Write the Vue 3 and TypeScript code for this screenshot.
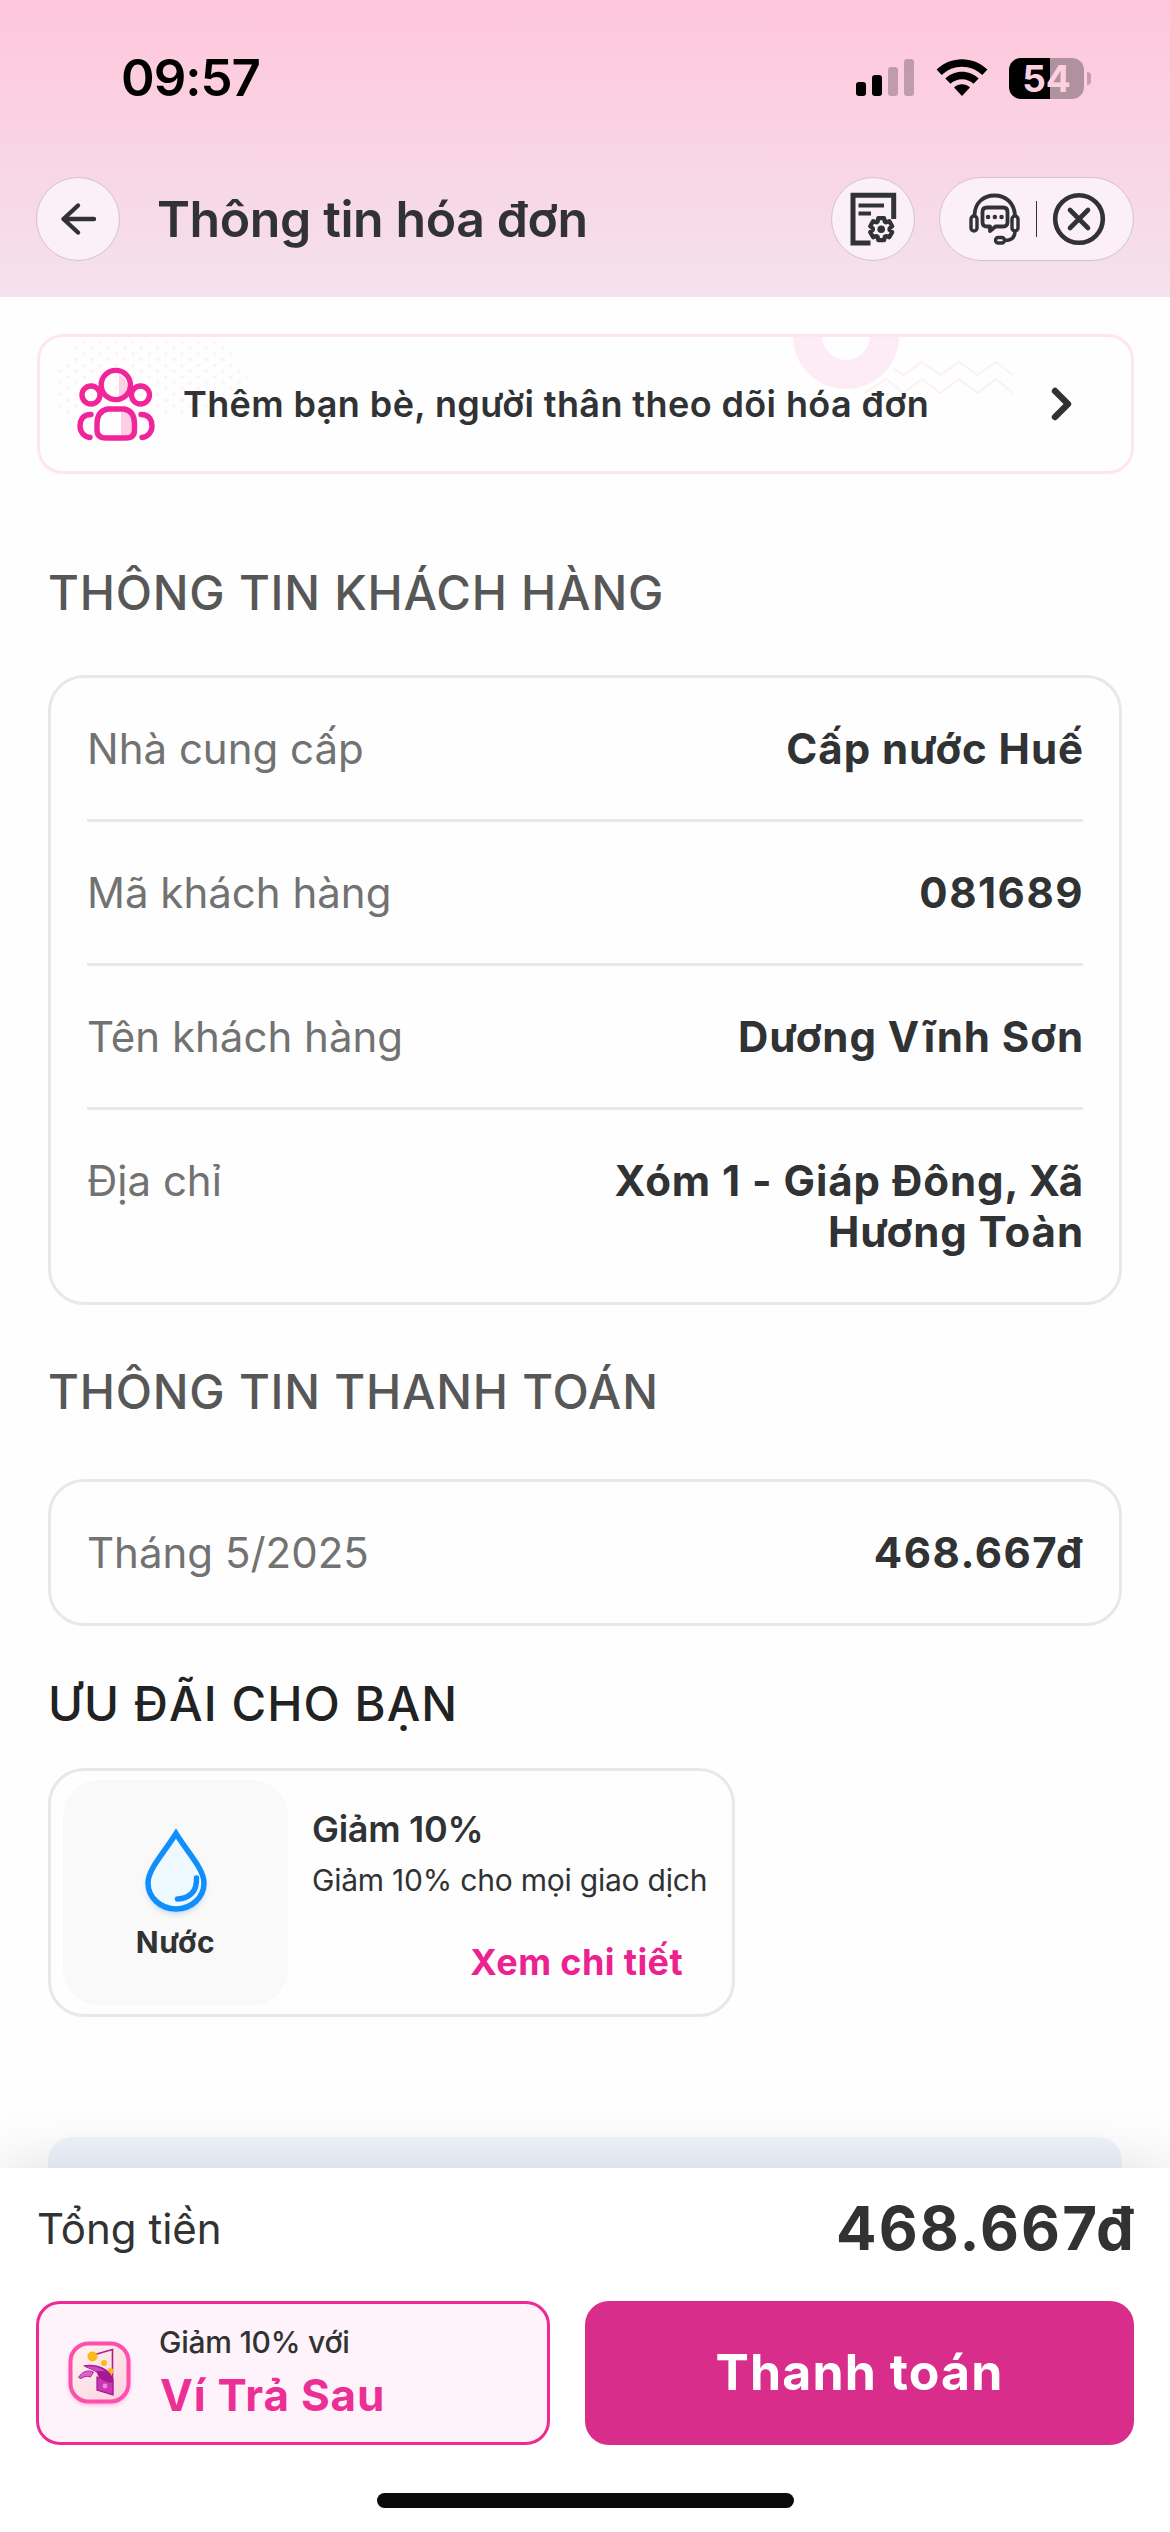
<script setup lang="ts">
interface InfoRow {
  label: string
  value: string
  numeric?: boolean
}

const customer: InfoRow[] = [
  { label: 'Nhà cung cấp', value: 'Cấp nước Huế' },
  { label: 'Mã khách hàng', value: '081689', numeric: true },
  { label: 'Tên khách hàng', value: 'Dương Vĩnh Sơn' },
  { label: 'Địa chỉ', value: 'Xóm 1 - Giáp Đông, Xã Hương Toàn' },
]

const payments: InfoRow[] = [{ label: 'Tháng 5/2025', value: '468.667đ', numeric: true }]

// Outline of a six-toothed gear centred on (cx, cy).
function gear(cx: number, cy: number, outer: number, inner: number): string {
  const pts: string[] = []
  for (let i = 0; i < 6; i++) {
    const base = -90 + i * 60
    const steps: [number, number][] = [
      [-25, inner],
      [-15, outer],
      [15, outer],
      [25, inner],
    ]
    for (const [offset, r] of steps) {
      const a = ((base + offset) * Math.PI) / 180
      pts.push(`${(cx + r * Math.cos(a)).toFixed(2)} ${(cy + r * Math.sin(a)).toFixed(2)}`)
    }
  }
  return `M${pts.join('L')}Z`
}

const gearPath = gear(31.2, 38.2, 11.4, 8.4)
</script>

<template>
  <div class="screen">
    <header class="header">
      <div class="status">
        <span class="time">09:57</span>
        <div class="status-icons">
          <svg class="signal" width="58" height="38" viewBox="0 0 58 38">
            <rect x="0" y="23" width="10" height="14" rx="3" />
            <rect x="16" y="16" width="10" height="21" rx="3" />
            <rect x="32" y="8" width="10" height="29" rx="3" opacity=".24" />
            <rect x="48" y="0" width="10" height="37" rx="3" opacity=".24" />
          </svg>
          <svg class="wifi" width="52" height="38" viewBox="0 0 52 38">
            <path d="M.6 10.6C14.8-3.2 37.2-3.2 51.4 10.6L46.300 16C35 4.900 17 4.900 5.700 16Z" />
            <path d="M9.300 19.600C18.600 10.500 33.400 10.500 42.700 19.600L37.500 24.800C31.100 18.700 20.900 18.700 14.500 24.800Z" />
            <path d="M18 28.400C22.600 24.300 29.400 24.300 34 28.400L26 37Z" />
          </svg>
          <div class="battery">
            <span class="battery-body">54</span>
            <span class="battery-nub"></span>
          </div>
        </div>
      </div>
      <nav class="nav">
        <button class="round" aria-label="Back">
          <svg width="40" height="40" viewBox="0 0 40 40" class="ink">
            <path d="M20 6.500L5.500 20L20 33.500M5.500 20H36" stroke-width="4.400" />
          </svg>
        </button>
        <h1 class="title">Thông tin hóa đơn</h1>
        <button class="round doc" aria-label="Settings">
          <svg width="50" height="56" viewBox="0 0 50 56" class="ink sharp">
            <path d="M43.700 28V4.300H3V52H20.500" stroke-width="5" />
            <path d="M8.500 14.500H34M8.500 22.500H21" stroke-width="4.200" />
            <path :d="gearPath" stroke-width="4.200" stroke-linejoin="round" />
            <circle cx="31.200" cy="38.200" r="3.800" class="solid" />
          </svg>
        </button>
        <div class="pill">
          <svg class="ink" width="52" height="52" viewBox="0 0 52 52">
            <rect x="2" y="23" width="6" height="15" rx="3" stroke-width="3.400" />
            <rect x="43" y="23" width="6" height="15" rx="3" stroke-width="3.400" />
            <path d="M5.500 22C6 10 14 2.500 25.500 2.500S45 10 46 22" stroke-width="3.800" />
            <path d="M18 14.500H34Q38.500 14.500 38.500 19V29Q38.500 33.500 34 33.500H26.500L21 38V33.500H18Q13.500 33.500 13.500 29V19Q13.500 14.500 18 14.500Z" stroke-width="3.800" />
            <path d="M19 24H19.100M25.800 24H25.900M32.500 24H32.600" stroke-width="4.400" />
            <path d="M46 38C46 44.500 42.500 47.500 36 47.500" stroke-width="3.400" />
            <rect x="26.500" y="44.500" width="9" height="5.500" rx="2.700" stroke-width="3.400" />
          </svg>
          <span class="pill-line"></span>
          <svg class="ink" width="54" height="54" viewBox="0 0 54 54">
            <circle cx="27" cy="27" r="23.800" stroke-width="4.600" />
            <path d="M18 18L36 36M36 18L18 36" stroke-width="4.600" />
          </svg>
        </div>
      </nav>
    </header>

    <main class="content">
      <section class="banner">
        <svg class="banner-art" width="1091" height="134" viewBox="40 337 1091 134">
          <defs>
            <pattern id="dots" width="16.300" height="11.600" patternUnits="userSpaceOnUse" x="73" y="345">
              <circle cx="3" cy="3" r="1.800" />
              <circle cx="11.150" cy="8.800" r="1.800" />
            </pattern>
          </defs>
          <path d="M80 342H225L248 378L215 415H52L56 370Z" fill="url(#dots)" />
          <circle class="ring" cx="846" cy="336" r="38.500" />
          <path class="wave" d="M894 369L903.500 375L922 362L940.600 375L959 362L978 375L995.500 362L1013 375M865 393L886 379L903.500 393L922 379L940.600 393L959 379L978 393L995.500 379L1013 393" />
        </svg>
        <svg class="people" width="78" height="76" viewBox="0 0 78 76">
          <path class="shade" d="M42 8Q51 14 50 22Q48 31 42 33Z" />
          <path class="shade" d="M44 45H52Q58 52 57 64V72H44Z" />
          <circle cx="38.800" cy="19" r="14.600" />
          <circle cx="14" cy="29" r="9" />
          <circle cx="63.500" cy="29" r="9" />
          <path d="M31 43H47Q57.500 45 57.500 58V64Q57.500 72 49 72H29Q20 72 20 64V58Q20 45 31 43Z" />
          <path d="M14 48.500C5 48.500 3 55 3 60C3 66 7 71 13 71.500" />
          <path d="M64 48.500C73 48.500 75 55 75 60C75 66 71 71 65 71.500" />
        </svg>
        <span class="banner-text">Thêm bạn bè, người thân theo dõi hóa đơn</span>
        <svg class="ink" width="26" height="38" viewBox="0 0 26 38">
          <path d="M6 6L19 19L6 32" stroke-width="6.400" />
        </svg>
      </section>

      <h2 class="heading first">THÔNG TIN KHÁCH HÀNG</h2>
      <dl class="card">
        <div v-for="row in customer" :key="row.label" class="row">
          <dt>{{ row.label }}</dt>
          <dd :class="{ numeric: row.numeric }">{{ row.value }}</dd>
        </div>
      </dl>

      <h2 class="heading second">THÔNG TIN THANH TOÁN</h2>
      <dl class="card">
        <div v-for="row in payments" :key="row.label" class="row">
          <dt>{{ row.label }}</dt>
          <dd :class="{ numeric: row.numeric }">{{ row.value }}</dd>
        </div>
      </dl>

      <h2 class="heading third">ƯU ĐÃI CHO BẠN</h2>
      <article class="offer">
        <div class="offer-thumb">
          <svg width="80" height="100" viewBox="0 0 80 100">
            <path class="drop-shadow" d="M40 16C52 37 68 50 68 66A28 26 0 0 1 12 66C12 50 28 37 40 16Z" />
            <path class="drop" d="M40 12.500C52 32 68 48 68 62A28 26 0 0 1 12 62C12 48 28 32 40 12.500Z" />
            <path class="drop-line" d="M60.500 57C61 70 54 77.500 41.500 78" />
          </svg>
          <span>Nước</span>
        </div>
        <div class="offer-body">
          <strong>Giảm 10%</strong>
          <p>Giảm 10% cho mọi giao dịch</p>
          <a>Xem chi tiết</a>
        </div>
      </article>
      <div class="next-card"></div>
    </main>

    <footer class="sheet">
      <div class="total">
        <span class="total-label">Tổng tiền</span>
        <strong class="total-value">468.667đ</strong>
      </div>
      <div class="actions">
        <button class="later">
          <svg width="72" height="72" viewBox="0 0 72 72">
            <defs>
              <linearGradient id="tile" x1="0" y1="0" x2="1" y2="1">
                <stop offset="0" stop-color="#fff6f0" />
                <stop offset="1" stop-color="#fbcfe0" />
              </linearGradient>
            </defs>
            <rect class="tile-glow" x="5" y="8" width="61" height="60" rx="20" />
            <rect x="6.500" y="6.500" width="58" height="58" rx="18" fill="url(#tile)" stroke="#fd4fae" stroke-width="4" />
            <path d="M31 17.500L48.500 12.500V57.500" fill="none" stroke="#a8218c" stroke-width="1.600" />
            <circle cx="46.500" cy="34" r="3" fill="#fbb91a" />
            <path d="M33 40L49 42V58L33 53Z" fill="#c936b6" stroke="#a31688" stroke-width="1.200" />
            <path d="M14.500 40.500C18 34.500 24 32.500 29.500 35L26.500 40C22 38.500 19.500 40 17 41.500Z" fill="#de5fce" stroke="#b0239a" stroke-width="1" />
            <path d="M19 28.500C30 26 44 30 48.500 40V46C42 45 35 43 33 36C29 32 24 32.500 19 28.500Z" fill="#a6198f" />
            <path d="M22 29.500C29 28.500 37 30 42 35C37 33 33 35 31 34C28 31.500 25 32 22 29.500Z" fill="#cf48bd" />
            <circle cx="28.500" cy="19.500" r="5" fill="#fbb91a" />
            <circle cx="40" cy="26" r="3" fill="#fbb91a" />
            <circle cx="41" cy="49" r="2.400" fill="#e88bdc" />
          </svg>
          <span class="later-text">
            <small>Giảm 10% với</small>
            <b>Ví Trả Sau</b>
          </span>
        </button>
        <button class="pay">Thanh toán</button>
      </div>
      <div class="home"></div>
    </footer>
  </div>
</template>

<style>
body {
  margin: 0;
  background: #fff;
}
</style>

<style scoped>
.screen {
  width: 1170px;
  height: 2532px;
  overflow: hidden;
  display: flex;
  flex-direction: column;
  background: #fefefe;
  color: #303233;
  font-family: Inter, 'Noto Sans', sans-serif;
}
button {
  font: inherit;
  border: 0;
  padding: 0;
  color: inherit;
}
.ink {
  fill: none;
  stroke: #303233;
  stroke-linecap: round;
  stroke-linejoin: round;
}
.ink.sharp {
  stroke-linecap: butt;
  stroke-linejoin: miter;
}
.solid {
  fill: #303233;
  stroke: none;
}

/* Header */
.header {
  height: 297px;
  flex: none;
  background: linear-gradient(180deg, #ffc6db 0%, #fad3e2 45%, #f4e2ec 100%);
}
.status {
  height: 177px;
  box-sizing: border-box;
  padding: 47px 79px 0 121px;
  display: flex;
  justify-content: space-between;
  align-items: flex-start;
  color: #000;
}
.time {
  font-size: 51px;
  line-height: 62px;
  font-weight: 600;
  letter-spacing: -1px;
}
.status-icons {
  display: flex;
  align-items: center;
  height: 62px;
}
.wifi {
  margin-left: 22px;
}
.battery {
  margin-left: 21px;
  display: flex;
  align-items: center;
  gap: 3px;
}
.battery-body {
  width: 75px;
  height: 41px;
  border-radius: 12px;
  text-align: center;
  line-height: 41px;
  font-size: 37px;
  font-weight: 700;
  color: #fcd0e1;
  background: linear-gradient(90deg, #000 41px, #b0929e 41px);
}
.battery-nub {
  width: 4px;
  height: 13px;
  border-radius: 0 4px 4px 0;
  background: #c39fae;
}
.nav {
  height: 84px;
  padding: 0 36px;
  display: flex;
  align-items: center;
}
.round,
.pill {
  box-sizing: border-box;
  height: 84px;
  flex: none;
  background: #fbf0f6;
  border: 1px solid #d5c3cc;
  border-radius: 42px;
  display: flex;
  align-items: center;
  justify-content: center;
}
.round {
  width: 84px;
}
.title {
  margin: 0 auto 0 37px;
  font-size: 50px;
  line-height: 60px;
  font-weight: 600;
  letter-spacing: -.4px;
  white-space: nowrap;
}
.doc {
  margin-right: 24px;
  padding-left: 3px;
}
.pill {
  width: 195px;
  padding-left: 2px;
}
.pill-line {
  width: 1px;
  height: 36px;
  margin: 0 15px;
  background: #303233;
}

/* Content */
.content {
  height: 1871px;
  flex: none;
  overflow: hidden;
  display: flex;
  flex-direction: column;
}
.banner {
  position: relative;
  box-sizing: border-box;
  height: 140px;
  flex: none;
  margin: 37px 36px 0 37px;
  padding: 0 56px 0 37px;
  border: 3px solid #ffe6ee;
  border-radius: 26px;
  display: flex;
  align-items: center;
}
.banner-art {
  position: absolute;
  left: 0;
  top: 0;
}
.banner-art circle {
  fill: #fbf1f5;
}
.banner-art .ring {
  fill: none;
  stroke: #fdecf6;
  stroke-width: 29px;
}
.wave {
  fill: none;
  stroke: #fdf0f1;
  stroke-width: 2px;
}
.people {
  position: relative;
  fill: none;
  stroke: #f0259a;
  stroke-width: 5.400px;
  stroke-linecap: round;
  stroke-linejoin: round;
}
.people .shade {
  fill: #fecfe3;
  stroke: none;
}
.banner-text {
  position: relative;
  margin: 0 auto 0 28px;
  font-size: 36px;
  line-height: 48px;
  font-weight: 600;
  letter-spacing: .4px;
  white-space: nowrap;
}
.heading {
  margin: 0 48px;
  height: 60px;
  line-height: 60px;
  font-size: 47.300px;
  font-weight: 500;
  letter-spacing: .8px;
  white-space: nowrap;
  color: #575757;
}
.heading.first {
  margin-top: 89px;
  margin-bottom: 52px;
}
.heading.second {
  margin-top: 57px;
  margin-bottom: 57px;
}
.heading.third {
  margin-top: 48px;
  margin-bottom: 34px;
  letter-spacing: 1.100px;
  color: #222;
}
.card {
  margin: 0 48px;
  padding: 0 36px;
  border: 3px solid #e8e8e8;
  border-radius: 36px;
}
.row {
  display: flex;
  justify-content: space-between;
  padding: 45px 0;
  font-size: 42px;
  line-height: 51px;
}
.row + .row {
  border-top: 3px solid #e8e8e8;
}
dt {
  color: #727272;
  white-space: nowrap;
}
dd {
  margin: 0 -1px 0 0;
  width: 500px;
  text-align: right;
  font-weight: 700;
  letter-spacing: .95px;
}
dd.numeric {
  letter-spacing: 1.500px;
}
.offer {
  box-sizing: border-box;
  width: 687px;
  height: 249px;
  margin-left: 48px;
  padding: 9px 12px;
  border: 3px solid #e8e8e8;
  border-radius: 36px;
  display: flex;
}
.offer-thumb {
  width: 225px;
  height: 225px;
  flex: none;
  border-radius: 36px;
  background: #f9f9f9;
  display: flex;
  flex-direction: column;
  align-items: center;
}
.offer-thumb svg {
  margin-top: 41px;
  fill: #eef9ff;
  stroke: #108efc;
}
.drop {
  stroke-width: 5.500px;
}
.drop-line {
  fill: none;
  stroke-width: 5.500px;
  stroke-linecap: round;
}
.drop-shadow {
  fill: #9dbfe0;
  stroke: none;
  filter: blur(3px);
  opacity: .8;
}
.offer-thumb span {
  margin-top: 3px;
  font-size: 30px;
  line-height: 36px;
  font-weight: 700;
  letter-spacing: .6px;
}
.offer-body {
  flex: 1;
  margin-left: 24px;
  padding-top: 24px;
  display: flex;
  flex-direction: column;
  white-space: nowrap;
}
.offer-body strong {
  font-size: 36px;
  line-height: 50px;
  font-weight: 600;
  letter-spacing: -.3px;
}
.offer-body p {
  margin: 5px 0 0;
  font-size: 30px;
  line-height: 42px;
  letter-spacing: -.22px;
}
.offer-body a {
  align-self: flex-end;
  margin: 36px 37px 0 0;
  font-size: 36px;
  line-height: 50px;
  font-weight: 700;
  letter-spacing: .4px;
  color: #eb2290;
}
.next-card {
  flex: none;
  height: 60px;
  margin: 120px 48px 0;
  border-radius: 24px 24px 0 0;
  background: #eff4fc;
}

/* Payment sheet */
.sheet {
  position: relative;
  flex: 1;
  padding: 0 36px;
  background: #fff;
  box-shadow: 0 0 60px rgba(0, 0, 0, .13);
  display: flex;
  flex-direction: column;
}
.total {
  height: 121px;
  margin-bottom: 12px;
  display: flex;
  align-items: center;
  justify-content: space-between;
}
.total-label {
  margin-left: 1px;
  font-size: 42px;
}
.total-value {
  margin: 0 -2px 2px 0;
  font-size: 60px;
  font-weight: 700;
  letter-spacing: 2.100px;
}
.actions {
  display: flex;
  gap: 35px;
}
.later,
.pay {
  box-sizing: border-box;
  height: 144px;
  border-radius: 24px;
}
.later {
  width: 514px;
  padding-left: 25px;
  border: 3px solid #ef2a94;
  background: #fef3fa;
  display: flex;
  align-items: center;
}
.tile-glow {
  fill: #fbb3d6;
  filter: blur(2px);
}
.later-text {
  margin-left: 23px;
  display: flex;
  flex-direction: column;
  text-align: left;
  white-space: nowrap;
}
.later-text small {
  font-size: 30px;
  line-height: 44px;
  font-weight: 500;
  letter-spacing: -.25px;
}
.later-text b {
  margin-left: 1px;
  font-size: 44px;
  line-height: 62px;
  font-weight: 700;
  letter-spacing: .8px;
  color: #ec2f95;
}
.pay {
  flex: 1;
  padding-bottom: 2px;
  background: #d82d8b;
  color: #fff;
  font-size: 50px;
  font-weight: 700;
  letter-spacing: 1.100px;
}
.home {
  width: 417px;
  height: 15px;
  margin: 48px auto 0;
  border-radius: 8px;
  background: #0b0b0b;
}
</style>
